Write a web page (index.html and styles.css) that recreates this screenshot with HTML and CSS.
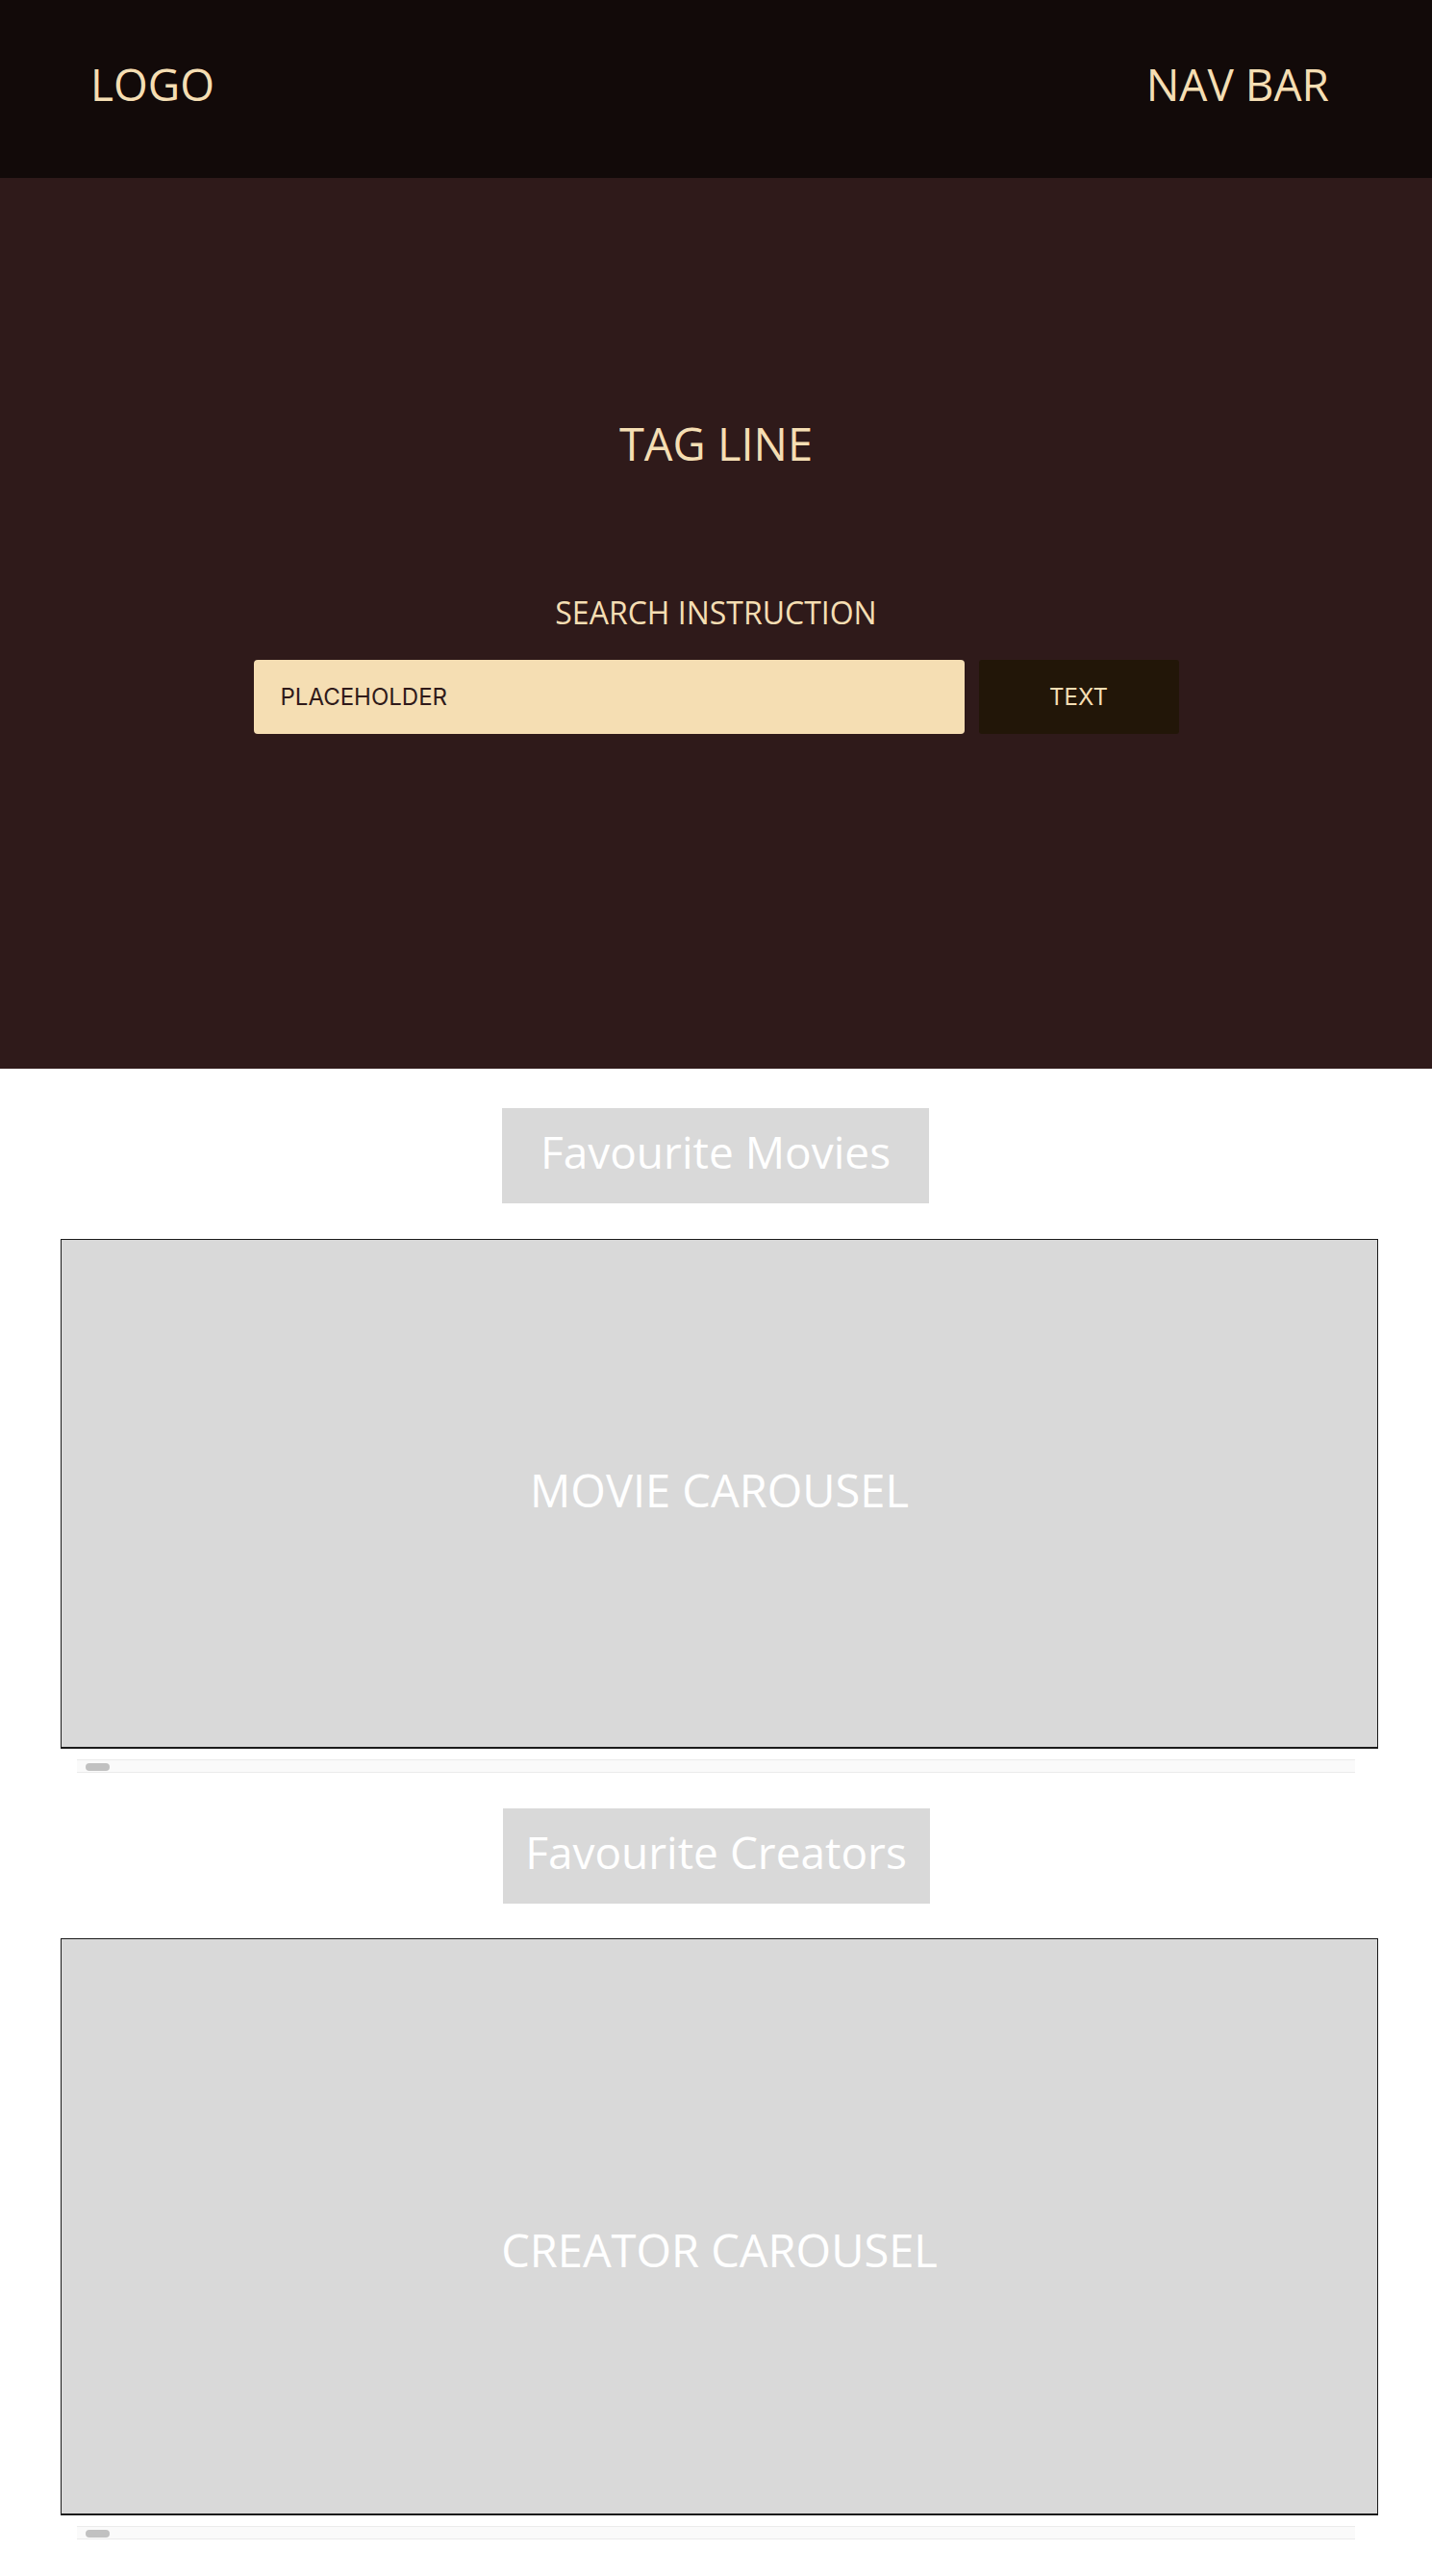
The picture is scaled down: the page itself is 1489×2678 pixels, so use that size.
FILE: index.html
```html
<!DOCTYPE html>
<html lang="en">
<head>
<meta charset="utf-8">
<title>Home</title>
<link rel="stylesheet" href="styles.css">
</head>
<body>
<header class="site-header">
  <div class="logo">LOGO</div>
  <nav class="nav">NAV BAR</nav>
</header>
<section class="hero">
  <h1 class="tagline">TAG LINE</h1>
  <p class="search-instruction">SEARCH INSTRUCTION</p>
  <form class="search" onsubmit="return false">
    <input class="search-input" type="text" placeholder="PLACEHOLDER">
    <button class="search-button" type="button">TEXT</button>
  </form>
</section>
<main class="content">
  <section class="fav fav-movies">
    <h2 class="fav-title">Favourite Movies</h2>
    <div class="carousel carousel-movies"><span class="carousel-label">MOVIE CAROUSEL</span></div>
    <div class="scroll-track"><div class="scroll-thumb"></div></div>
  </section>
  <section class="fav fav-creators">
    <h2 class="fav-title">Favourite Creators</h2>
    <div class="carousel carousel-creators"><span class="carousel-label">CREATOR CAROUSEL</span></div>
    <div class="scroll-track"><div class="scroll-thumb"></div></div>
  </section>
</main>
</body>
</html>
```
FILE: styles.css
```css
* { box-sizing: border-box; }
html, body { margin: 0; padding: 0; }
body {
  background: #ffffff;
  font-family: "Open Sans", "Noto Sans", sans-serif;
  min-height: 2678px;
}
.site-header {
  height: 185px;
  background: #120a09;
  display: flex;
  justify-content: space-between;
  align-items: center;
  padding: 0 107px 0 94px;
  color: #f5deb3;
  font-size: 46px;
  line-height: 56px;
}
.logo, .nav { padding-bottom: 11px; }
.hero {
  height: 926px;
  background: #2f1a1a;
  display: flex;
  flex-direction: column;
  align-items: center;
  padding-top: 248px;
  color: #f5deb3;
}
.tagline {
  margin: 0;
  font-weight: 400;
  font-size: 47px;
  line-height: 56px;
}
.search-instruction {
  margin: 129px 0 0;
  font-size: 32px;
  line-height: 38px;
}
.search {
  margin-top: 30px;
  display: flex;
  gap: 15px;
}
.search-input {
  width: 739px;
  height: 77px;
  border: none;
  border-radius: 4px;
  background: #f5deb3;
  padding: 0 0 0 28px;
  font-family: "Inter", "Roboto", sans-serif;
  font-size: 24px;
  color: #2f1a1a;
  outline: none;
}
.search-input::placeholder { color: #2f1a1a; opacity: 1; }
.search-button {
  width: 208px;
  height: 77px;
  border: none;
  border-radius: 3px;
  background: #221608;
  color: #f5deb3;
  font-family: "Inter", "Roboto", sans-serif;
  font-size: 24px;
  padding: 0;
}
.content {
  display: flex;
  flex-direction: column;
}
.fav {
  display: flex;
  flex-direction: column;
}
.fav-movies { padding-top: 41px; }
.fav-creators { padding-top: 37px; }
.fav-title {
  align-self: center;
  width: 444px;
  height: 99px;
  margin: 0;
  background: #d9d9d9;
  color: #ffffff;
  font-weight: 400;
  font-size: 46px;
  line-height: 56px;
  display: flex;
  align-items: center;
  justify-content: center;
  padding-bottom: 9px;
}
.fav-movies .fav-title { margin-left: -1px; }
.carousel {
  margin: 37px 0 0 63px;
  width: 1370px;
  background: #d9d9d9;
  border: 1px solid #1b1b1b;
  border-bottom-width: 2px;
  display: flex;
  justify-content: center;
  align-items: flex-start;
  color: #ffffff;
  font-size: 47px;
  line-height: 56px;
}
.carousel-movies { height: 530px; padding-top: 232px; }
.carousel-creators { height: 600px; padding-top: 295px; margin-top: 36px; }
.scroll-track {
  margin: 11px 0 0 80px;
  width: 1329px;
  height: 14px;
  background: #fafafa;
  border-top: 1px solid #ebebeb;
  border-bottom: 1px solid #ebebeb;
  padding: 3px 0 0 9px;
}
.scroll-thumb {
  width: 25px;
  height: 8px;
  border-radius: 4px;
  background: #c1c1c1;
}
```
